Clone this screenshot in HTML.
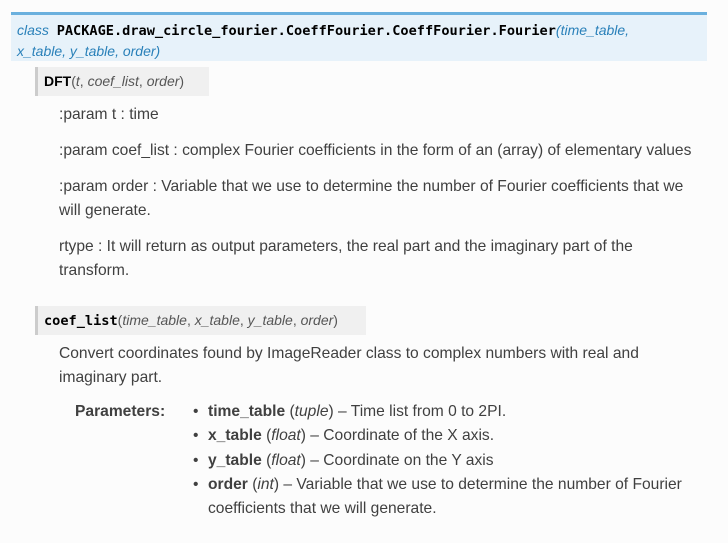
<!DOCTYPE html>
<html><head><meta charset="utf-8"><style>
body{margin:0;background:#fcfcfc;width:728px;height:543px;overflow:hidden;font-family:"Liberation Sans",sans-serif;color:#404040;font-size:15.6px;}
.cls{position:absolute;left:11px;top:12px;width:696px;height:46px;background:#e7f2fa;border-top:3px solid #6ab0de;}
.cls .t{position:absolute;left:6px;top:5px;font-size:14px;line-height:20px;color:#2980b9;width:690px;white-space:nowrap;}
.mono{font-family:"DejaVu Sans Mono","Liberation Mono",monospace;font-weight:bold;color:#000;font-size:13.6px;}
.it{font-style:italic;color:#2980b9;}
.sig{position:absolute;background:#f0f0f0;border-left:3px solid #ccc;height:29px;line-height:29px;font-size:14px;color:#555;}
.sig b{color:#000;}
.p{position:absolute;left:59px;line-height:24px;white-space:nowrap;}
ul{position:absolute;left:193px;top:400px;margin:0;padding:0;list-style:none;line-height:24.3px;}
li:before{content:"•";position:absolute;left:0;}
li{padding-left:15px;white-space:nowrap;}
</style></head><body>
<div class="cls"><div class="t"><span class="it">class</span>&nbsp; <span class="mono">PACKAGE.draw_circle_fourier.CoeffFourier.CoeffFourier.Fourier</span><span class="it">(time_table,<br>x_table, y_table, order)</span></div></div>
<div class="sig" style="left:35px;top:67px;width:165px;padding-left:6px;"><b>DFT</b>(<i>t</i>, <i>coef_list</i>, <i>order</i>)</div>
<div class="p" style="top:103px">:param t : time</div>
<div class="p" style="top:139px">:param coef_list : complex Fourier coefficients in the form of an (array) of elementary values</div>
<div class="p" style="top:175px">:param order : Variable that we use to determine the number of Fourier coefficients that we<br>will generate.</div>
<div class="p" style="top:235px">rtype : It will return as output parameters, the real part and the imaginary part of the<br>transform.</div>
<div class="sig" style="left:35px;top:306px;width:322px;padding-left:6px;"><span class="mono">coef_list</span>(<i>time_table</i>, <i>x_table</i>, <i>y_table</i>, <i>order</i>)</div>
<div class="p" style="top:342px">Convert coordinates found by ImageReader class to complex numbers with real and<br>imaginary part.</div>
<div class="p" style="left:75px;top:400px;font-weight:bold">Parameters:</div>
<ul>
<li><b>time_table</b> (<i>tuple</i>) – Time list from 0 to 2PI.</li>
<li><b>x_table</b> (<i>float</i>) – Coordinate of the X axis.</li>
<li><b>y_table</b> (<i>float</i>) – Coordinate on the Y axis</li>
<li><b>order</b> (<i>int</i>) – Variable that we use to determine the number of Fourier<br>coefficients that we will generate.</li>
</ul>
</body></html>
